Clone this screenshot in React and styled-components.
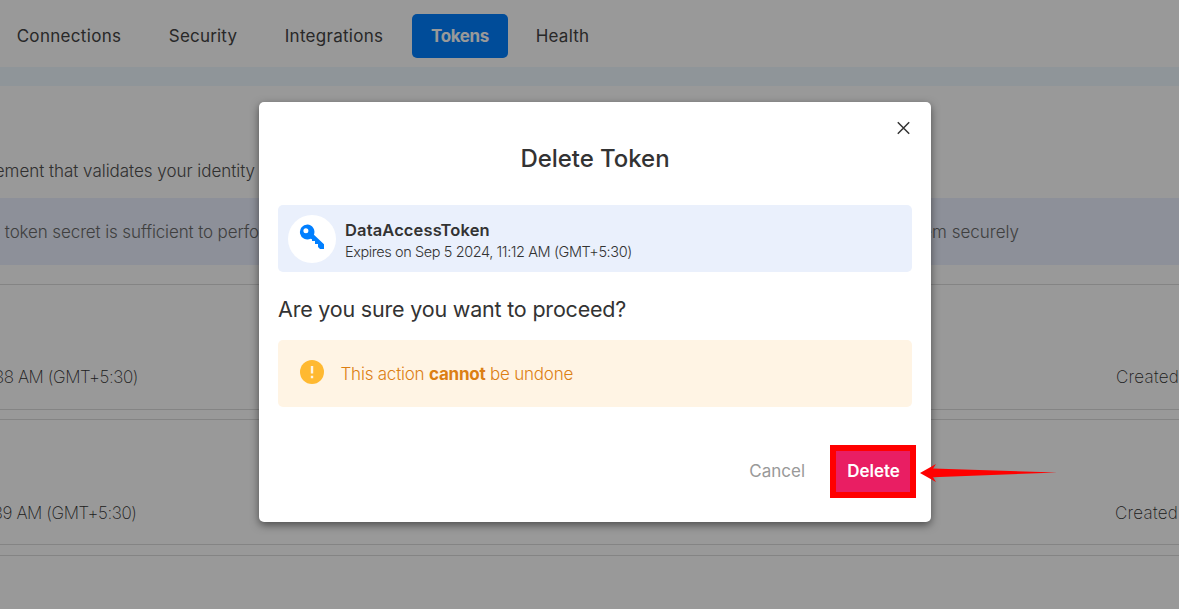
import React from "react";
import styled, { createGlobalStyle } from "styled-components";

const Global = createGlobalStyle`
  *, *::before, *::after { box-sizing: border-box; }
  html, body { margin: 0; padding: 0; }
  body {
    width: 1179px;
    height: 609px;
    overflow: hidden;
    background: #fff;
    color: #333;
    font-family: Inter, "Liberation Sans", sans-serif;
    -webkit-font-smoothing: antialiased;
  }
`;

const Text = styled.span`
  display: block;
  white-space: nowrap;
  font-size: ${(p) => p.$size || 17}px;
  line-height: ${(p) => p.$line || 24}px;
  font-weight: ${(p) => p.$weight || 300};
  letter-spacing: ${(p) => p.$track || 0}px;
  color: ${(p) => p.$color || "#333"};
`;

const Page = styled.div`
  position: relative;
  width: 1179px;
  height: 609px;
  overflow: hidden;
  display: flex;
  flex-direction: column;
`;

const Nav = styled.nav`
  display: flex;
  align-items: flex-start;
  height: 67px;
  flex: none;
  padding: 14px 0 0 7px;
`;

const Tab = styled.a`
  display: flex;
  align-items: center;
  justify-content: center;
  width: ${(p) => p.$width}px;
  height: 44px;
  margin-right: ${(p) => p.$gap || 0}px;
  border-radius: 5px;
  background: ${(p) => (p.$active ? "#007fff" : "transparent")};
`;

const Strip = styled.div`
  height: 19px;
  flex: none;
  background: #eff8ff;
`;

const Intro = styled.section`
  height: 112px;
  flex: none;
  padding: 73px 0 0;
`;

const LeftText = styled.div`
  display: flex;
  justify-content: flex-end;
  width: ${(p) => p.$width}px;
`;

const Banner = styled.section`
  display: flex;
  justify-content: space-between;
  align-items: center;
  height: 67px;
  flex: none;
  padding: 1px 160px 0 0;
  margin-bottom: 19px;
  background: #ebf1ff;
`;

const Row = styled.section`
  display: flex;
  justify-content: space-between;
  flex: none;
  height: 126px;
  padding-top: ${(p) => p.$top}px;
  margin-bottom: ${(p) => p.$gap}px;
  border: solid #dcdcdc;
  border-width: 1px 0;
`;

const RowMeta = styled.div`
  width: ${(p) => p.$width}px;
`;

const Backdrop = styled.div`
  position: absolute;
  inset: 0;
  display: flex;
  justify-content: center;
  align-items: flex-start;
  padding: 102px 0 0 11px;
  background: rgba(0, 0, 0, 0.4);
`;

const Dialog = styled.div`
  display: flex;
  flex-direction: column;
  width: 672px;
  height: 420px;
  padding: 19px;
  border-radius: 5px;
  background: #fff;
  box-shadow: 0 3px 8px rgba(0, 0, 0, 0.5);
`;

const CloseRow = styled.div`
  display: flex;
  justify-content: flex-end;
  height: 14px;
  padding-right: 2px;
`;

const Title = styled.h2`
  display: flex;
  justify-content: center;
  margin: 8px 0 30px;
  height: 32px;
`;

const TokenCard = styled.div`
  display: flex;
  align-items: center;
  gap: 9px;
  height: 67px;
  flex: none;
  padding: 0 10px;
  border-radius: 5px;
  background: #eaf0fc;
`;

const KeyDisc = styled.div`
  display: flex;
  align-items: center;
  justify-content: center;
  width: 48px;
  height: 48px;
  padding-bottom: 4px;
  border-radius: 50%;
  background: #fff;
`;

const TokenText = styled.div`
  display: flex;
  flex-direction: column;
  padding-top: 4px;
`;

const Question = styled.div`
  height: 32px;
  margin: 21px 0 15px;
`;

const Warning = styled.div`
  display: flex;
  align-items: center;
  gap: 17px;
  height: 67px;
  flex: none;
  padding: 0 22px 0 21.5px;
  border-radius: 5px;
  background: #fff4e4;
  svg { margin-bottom: 3px; }
  b { font-weight: 700; }
`;

const Actions = styled.div`
  display: flex;
  justify-content: flex-end;
  align-items: center;
  gap: 27px;
  margin-top: 42px;
`;

const DeleteButton = styled.div`
  position: relative;
  display: flex;
  align-items: center;
  justify-content: center;
  width: 80px;
  height: 44px;
  border-radius: 5px;
  background: #e91e63;
  padding-left: 3px;
`;

const Highlight = styled.div`
  position: absolute;
  left: -2px;
  top: -4px;
  width: 86px;
  height: 53px;
  border: 6px solid #f00;
`;

const Pointer = styled.svg`
  position: absolute;
  left: 88px;
  top: 15px;
  overflow: visible;
`;

const tabs = [
  { label: "Connections", width: 124, gap: 26, track: 0.32 },
  { label: "Security", width: 92, gap: 24, track: 0.18 },
  { label: "Integrations", width: 122, gap: 17, track: 0.28 },
  { label: "Tokens", width: 96, gap: 16, track: -0.4, active: true },
  { label: "Health", width: 77, gap: 0, track: 0.25 },
];

export default function App() {
  return (
    <Page>
      <Global />
      <Nav>
        {tabs.map((t) => (
          <Tab key={t.label} $width={t.width} $gap={t.gap} $active={t.active}>
            <Text $weight={t.active ? 650 : 400} $track={t.track} $color={t.active ? "#fff" : "#444"}>
              {t.label}
            </Text>
          </Tab>
        ))}
      </Nav>
      <Strip />
      <Intro>
        <LeftText $width={255}><Text $track={-0.03} $color="#505050">ement that validates your identity</Text></LeftText>
      </Intro>
      <Banner>
        <LeftText $width={259}><Text $track={-0.12} $color="#6a6a6a">l token secret is sufficient to perfo</Text></LeftText>
        <Text $track={0} $color="#6a6a6a">em securely</Text>
      </Banner>
      <Row $top={80} $gap={9}>
        <LeftText $width={138}><Text $track={-0.42} $weight={200}>38 AM (GMT+5:30)</Text></LeftText>
        <RowMeta $width={63}><Text $weight={200} $track={0.25}>Created</Text></RowMeta>
      </Row>
      <Row $top={81} $gap={10}>
        <LeftText $width={136.5}><Text $track={-0.42} $weight={200}>39 AM (GMT+5:30)</Text></LeftText>
        <RowMeta $width={64}><Text $weight={200} $track={0.25}>Created</Text></RowMeta>
      </Row>
      <Row $top={0} $gap={0} />
      <Backdrop>
        <Dialog role="dialog">
          <CloseRow>
            <svg width="13" height="14" viewBox="0 0 13 14" fill="none" stroke="#333" strokeWidth="1.5">
              <path d="M.8 1.3 12.2 12.7M12.2 1.3.8 12.7" />
            </svg>
          </CloseRow>
          <Title><Text $size={24} $line={32} $weight={470} $track={-0.05}>Delete Token</Text></Title>
          <TokenCard>
            <KeyDisc>
              <svg width="26" height="26" viewBox="0 0 26 26">
                <path fill="#007fff" fillRule="evenodd" d="M8.4.5a7.5 7.5 0 1 0 3.2 14.3l1.4.5v1.8h3v3h3v3l2 1.9h4v-4.8L14.9 10.8A7.5 7.5 0 0 0 8.4.5ZM6.9 4.2a2.5 2.5 0 1 1 0 5 2.5 2.5 0 0 1 0-5Z" />
              </svg>
            </KeyDisc>
            <TokenText>
              <Text $size={16.5} $line={23} $weight={600} $track={0.12}>DataAccessToken</Text>
              <Text $size={14.5} $line={20} $track={-0.41}>Expires on Sep 5 2024, 11:12 AM (GMT+5:30)</Text>
            </TokenText>
          </TokenCard>
          <Question><Text $size={21.5} $line={32} $weight={400} $track={-0.2}>Are you sure you want to proceed?</Text></Question>
          <Warning>
            <svg width="24" height="24" viewBox="0 0 24 24">
              <circle cx="12" cy="12" r="12" fill="#ffb931" />
              <path d="M10.8 6h2.4v7.5h-2.4zM10.8 15.8h2.4v2.4h-2.4z" fill="#fff4e3" />
            </svg>
            <Text $color="#dc7f14" $track={-0.22}>This action <b>cannot</b> be undone</Text>
          </Warning>
          <Actions>
            <Text $weight={400} $color="#999">Cancel</Text>
            <DeleteButton>
              <Text $weight={600} $color="#fff">Delete</Text>
              <Highlight />
              <Pointer width="137" height="18" viewBox="0 0 137 18">
                <path fill="#f00" d="M0 9 16 0l-3 4.5L137 8.5 13 13.3l3 4.7Z" />
              </Pointer>
            </DeleteButton>
          </Actions>
        </Dialog>
      </Backdrop>
    </Page>
  );
}
